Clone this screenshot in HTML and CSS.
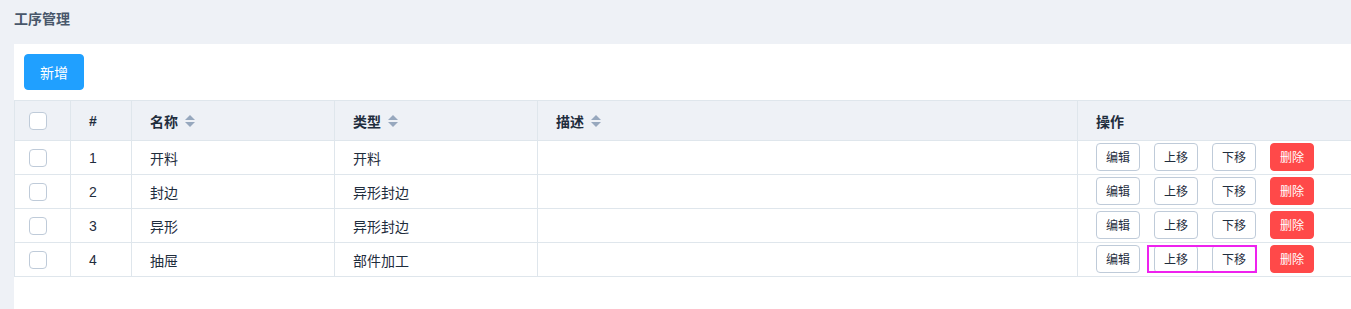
FILE: index.html
```html
<!DOCTYPE html>
<html lang="zh-CN">
<head>
<meta charset="utf-8">
<title>工序管理</title>
<link rel="stylesheet" href="styles.css">
</head>
<body>
<div class="page-title">工序管理</div>
<div class="panel">
  <div class="toolbar"><button class="btn btn-primary">新增</button></div>
  <table class="grid">
    <thead>
      <tr>
        <th class="c-check"><div class="cell"><span class="checkbox"></span></div></th>
        <th class="c-idx"><div class="cell">#</div></th>
        <th class="c-name"><div class="cell">名称<span class="sort"><i class="up"></i><i class="down"></i></span></div></th>
        <th class="c-type"><div class="cell">类型<span class="sort"><i class="up"></i><i class="down"></i></span></div></th>
        <th class="c-desc"><div class="cell">描述<span class="sort"><i class="up"></i><i class="down"></i></span></div></th>
        <th class="c-op"><div class="cell">操作</div></th>
      </tr>
    </thead>
    <tbody>
      <tr>
        <td><div class="cell"><span class="checkbox"></span></div></td>
        <td><div class="cell">1</div></td>
        <td><div class="cell">开料</div></td>
        <td><div class="cell">开料</div></td>
        <td><div class="cell"></div></td>
        <td><div class="cell ops"><button class="btn btn-mini">编辑</button><button class="btn btn-mini">上移</button><button class="btn btn-mini">下移</button><button class="btn btn-mini btn-danger">删除</button></div></td>
      </tr>
      <tr>
        <td><div class="cell"><span class="checkbox"></span></div></td>
        <td><div class="cell">2</div></td>
        <td><div class="cell">封边</div></td>
        <td><div class="cell">异形封边</div></td>
        <td><div class="cell"></div></td>
        <td><div class="cell ops"><button class="btn btn-mini">编辑</button><button class="btn btn-mini">上移</button><button class="btn btn-mini">下移</button><button class="btn btn-mini btn-danger">删除</button></div></td>
      </tr>
      <tr>
        <td><div class="cell"><span class="checkbox"></span></div></td>
        <td><div class="cell">3</div></td>
        <td><div class="cell">异形</div></td>
        <td><div class="cell">异形封边</div></td>
        <td><div class="cell"></div></td>
        <td><div class="cell ops"><button class="btn btn-mini">编辑</button><button class="btn btn-mini">上移</button><button class="btn btn-mini">下移</button><button class="btn btn-mini btn-danger">删除</button></div></td>
      </tr>
      <tr>
        <td><div class="cell"><span class="checkbox"></span></div></td>
        <td><div class="cell">4</div></td>
        <td><div class="cell">抽屉</div></td>
        <td><div class="cell">部件加工</div></td>
        <td><div class="cell"></div></td>
        <td><div class="cell ops"><div class="btn-row"><button class="btn btn-mini">编辑</button><button class="btn btn-mini">上移</button><button class="btn btn-mini">下移</button><button class="btn btn-mini btn-danger">删除</button><span class="highlight"></span></div></div></td>
      </tr>
    </tbody>
  </table>
</div>
</body>
</html>
```

FILE: styles.css
```css
html, body {
  margin: 0;
  padding: 0;
  overflow: hidden;
}
body {
  background: #eef1f6;
  font-family: "Liberation Sans", "Noto Sans CJK SC", sans-serif;
  color: #1f2d3d;
  width: 1351px;
  height: 309px;
}
.page-title {
  box-sizing: border-box;
  height: 44px;
  padding: 9px 14px 0;
  line-height: 20px;
  font-size: 14px;
  font-weight: bold;
  color: #48576a;
}
.panel {
  margin-left: 14px;
  width: 1337px;
  height: 265px;
  background: #fff;
  overflow: hidden;
}
.toolbar {
  padding: 10px 10px;
  display: flex;
}
.btn {
  box-sizing: border-box;
  font-family: inherit;
  border: 1px solid #bfcbd9;
  background: #fff;
  color: #1f2d3d;
  border-radius: 4px;
  cursor: pointer;
  padding: 0;
  margin: 0;
}
.btn-primary {
  width: 60px;
  height: 36px;
  background: #20a0ff;
  border-color: #20a0ff;
  color: #fff;
  font-size: 14px;
}
.grid {
  border-collapse: separate;
  border-spacing: 0;
  table-layout: fixed;
  width: 1463px;
  border-top: 1px solid #dfe6ec;
  border-left: 1px solid #dfe6ec;
  font-size: 14px;
}
.grid th, .grid td {
  box-sizing: border-box;
  padding: 0;
  border-right: 1px solid #dfe6ec;
  border-bottom: 1px solid #dfe6ec;
  text-align: left;
}
.grid th {
  background: #eef1f6;
  font-weight: bold;
  font-size: 14px;
}
.c-check { width: 56px; }
.c-idx { width: 61px; }
.c-name { width: 203px; }
.c-type { width: 203px; }
.c-desc { width: 540px; }
.c-op { width: 400px; }
.cell {
  display: flex;
  align-items: center;
  height: 33px;
  padding: 0 18px;
  white-space: nowrap;
}
.grid th .cell { height: 39px; }
.grid th:first-child .cell,
.grid td:first-child .cell { padding-left: 14px; }
.checkbox {
  box-sizing: border-box;
  display: inline-block;
  width: 18px;
  height: 18px;
  border: 1px solid #bfcbd9;
  border-radius: 4px;
  background: #fff;
}
.sort {
  display: inline-flex;
  flex-direction: column;
  gap: 2px;
  margin-left: 7px;
}
.sort i {
  display: block;
  width: 0;
  height: 0;
  border-left: 5px solid transparent;
  border-right: 5px solid transparent;
}
.sort .up { border-bottom: 5px solid #97a8be; }
.sort .down { border-top: 5px solid #97a8be; }
.ops {
  gap: 14px;
  padding-bottom: 2px;
  box-sizing: border-box;
}
.btn-row {
  position: relative;
  display: flex;
  gap: 14px;
}
.btn-mini {
  width: 44px;
  height: 28px;
  font-size: 12px;
}
.btn-danger {
  background: #ff4949;
  border-color: #ff4949;
  color: #fff;
}
.highlight {
  position: absolute;
  left: 51px;
  top: 0;
  width: 110px;
  height: 28px;
  box-sizing: border-box;
  border: 2px solid #ee22ee;
  pointer-events: none;
}
```
